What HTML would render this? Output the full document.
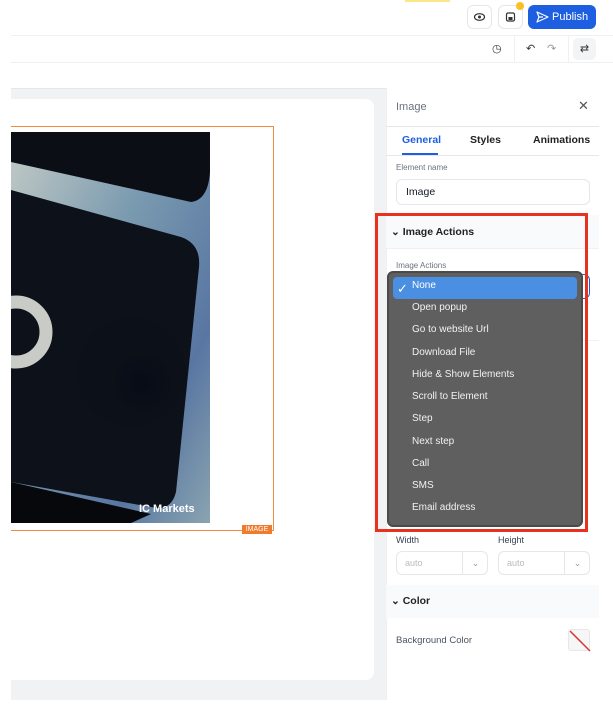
<!DOCTYPE html>
<html><head><meta charset="utf-8"><style>
*{box-sizing:border-box;margin:0;padding:0}
body{width:613px;height:713px;position:relative;overflow:hidden;background:#fff;font-family:"Liberation Sans",sans-serif;color:#111827}
.a{position:absolute}
.btn{position:absolute;border:1px solid #e5e7eb;border-radius:6px;background:#fff}
.item{position:absolute;left:412px;font-size:10px;color:#f1f1f1}
</style></head><body>
<div class="a" style="left:405px;top:0;width:45px;height:2px;background:#fde68a"></div>
<div class="btn" style="left:467px;top:5px;width:25px;height:24px"><svg width="23" height="22"><ellipse cx="11.5" cy="11" rx="5" ry="3.3" fill="none" stroke="#333" stroke-width="1.2"/><circle cx="11.5" cy="11" r="1.5" fill="#333"/></svg></div>
<div class="btn" style="left:498px;top:5px;width:25px;height:24px"><svg width="23" height="22"><rect x="7.5" y="7" width="8" height="8" rx="1.5" fill="none" stroke="#333" stroke-width="1.2"/><rect x="9.5" y="11" width="4" height="3" fill="#333"/></svg></div>
<div class="a" style="left:516px;top:2px;width:8px;height:8px;border-radius:50%;background:#fbbf24"></div>
<div class="a" style="left:528px;top:5px;width:68px;height:24px;background:#1d5fe0;border-radius:6px;color:#fff;font-size:11px;line-height:24px;padding-left:24px">Publish<svg class="a" style="left:8px;top:6px" width="13" height="12"><path d="M1 1L12 6L1 11L3 6Z M3 6H7" fill="none" stroke="#fff" stroke-width="1.2" stroke-linejoin="round"/></svg></div>
<div class="a" style="left:11px;top:35px;width:602px;height:1px;background:#eef0f2"></div>
<div class="a" style="left:514px;top:36px;width:1px;height:26px;background:#eef0f2"></div>
<div class="a" style="left:568px;top:36px;width:1px;height:26px;background:#eef0f2"></div>
<div class="a" style="left:492px;top:42px;font-size:11px;color:#333">◷</div>
<div class="a" style="left:526px;top:42px;font-size:11px;color:#333">↶</div>
<div class="a" style="left:547px;top:42px;font-size:11px;color:#999">↷</div>
<div class="a" style="left:573px;top:38px;width:23px;height:22px;background:#f3f4f6;border-radius:5px;font-size:11px;text-align:center;line-height:22px;color:#333">⇄</div>
<div class="a" style="left:11px;top:62px;width:602px;height:1px;background:#eef0f2"></div>
<div class="a" style="left:11px;top:88px;width:375px;height:612px;background:#f1f2f4"></div>
<div class="a" style="left:11px;top:99px;width:363px;height:581px;background:#fff;border-radius:0 8px 8px 0"></div>
<div class="a" style="left:11px;top:88px;width:375px;height:1px;background:#e5e7eb"></div>
<div class="a" style="left:11px;top:126px;width:263px;height:405px;border:1px solid #f08a3c;border-left:none"></div>
<svg class="a" style="left:11px;top:132px" width="199" height="391">
<defs><linearGradient id="g" x1="0" y1="0" x2="1" y2="1"><stop offset="0" stop-color="#c4ccc6"/><stop offset="0.4" stop-color="#7a9ab0"/><stop offset="0.75" stop-color="#5876a2"/><stop offset="1" stop-color="#8aa4b0"/></linearGradient>
<radialGradient id="r" cx="0.6" cy="0.6" r="0.3"><stop offset="0" stop-color="#050a18"/><stop offset="1" stop-color="#0c1018"/></radialGradient></defs>
<rect width="199" height="391" fill="url(#g)"/>
<path d="M0 0H199V40Q197 68 180 70L0 30Z" fill="#0b0e14"/>
<path d="M0 58L170 105Q190 112 188 135L165 360Q160 380 140 375L0 350Z" fill="#0d1119"/>
<path d="M0 350L140 382L120 391H0Z" fill="#06080c"/>
<circle cx="120" cy="240" r="55" fill="url(#r)" opacity="0.8"/>
<circle cx="5" cy="200" r="30" fill="none" stroke="#c8cbc6" stroke-width="13"/>
<text x="128" y="380" font-size="11" font-weight="bold" fill="#fff" font-family="Liberation Sans">IC Markets</text>
</svg>
<div class="a" style="left:242px;top:525px;width:30px;height:9px;background:#f07b2c;color:#fff;font-size:7px;line-height:9px;text-align:center">IMAGE</div>
<div class="a" style="left:386px;top:88px;width:213px;height:612px;background:#fff;border-left:1px solid #eef0f2"></div>
<div class="a" style="left:396px;top:101px;font-size:11px;color:#6b7280">Image</div>
<div class="a" style="left:578px;top:98px;font-size:13px;color:#555">✕</div>
<div class="a" style="left:386px;top:126px;width:213px;height:1px;background:#e5e7eb"></div>
<div class="a" style="left:402px;top:134px;font-size:10.5px;font-weight:bold;color:#1d5fe0">General</div>
<div class="a" style="left:470px;top:134px;font-size:10.5px;font-weight:bold;color:#222">Styles</div>
<div class="a" style="left:533px;top:134px;font-size:10.5px;font-weight:bold;color:#222">Animations</div>
<div class="a" style="left:402px;top:153px;width:36px;height:2px;background:#1d5fe0"></div>
<div class="a" style="left:386px;top:155px;width:213px;height:1px;background:#e5e7eb"></div>
<div class="a" style="left:396px;top:163px;font-size:8px;color:#6b7280">Element name</div>
<div class="a" style="left:396px;top:179px;width:194px;height:26px;border:1px solid #e5e7eb;border-radius:6px;font-size:10.5px;line-height:24px;padding-left:9px">Image</div>
<div class="a" style="left:386px;top:215px;width:213px;height:34px;background:#f9fafb;border-bottom:1px solid #eef0f2"></div>
<div class="a" style="left:391px;top:226px;font-size:10.5px;font-weight:bold;color:#222">⌄ Image Actions</div>
<div class="a" style="left:396px;top:261px;font-size:8px;color:#6b7280">Image Actions</div>
<div class="a" style="left:396px;top:274px;width:194px;height:25px;border:1px solid #1d5fe0;border-radius:6px"></div>
<div class="a" style="left:386px;top:340px;width:213px;height:1px;background:#eef0f2"></div>
<div class="a" style="left:387px;top:271px;width:196px;height:256px;background:#5f5f5f;border:2px solid #4a4a4a;border-radius:6px"></div>
<div class="a" style="left:393px;top:277px;width:184px;height:22px;background:#4a8fe2;border-radius:4px"></div>
<div class="a" style="left:397px;top:281px;font-size:13px;color:#fff">✓</div>
<div class="item" style="top:280px;color:#fff">None</div>
<div class="item" style="top:302px">Open popup</div>
<div class="item" style="top:324px">Go to website Url</div>
<div class="item" style="top:347px">Download File</div>
<div class="item" style="top:369px">Hide &amp; Show Elements</div>
<div class="item" style="top:391px">Scroll to Element</div>
<div class="item" style="top:413px">Step</div>
<div class="item" style="top:436px">Next step</div>
<div class="item" style="top:458px">Call</div>
<div class="item" style="top:480px">SMS</div>
<div class="item" style="top:502px">Email address</div>
<div class="a" style="left:375px;top:213px;width:213px;height:319px;border:3px solid #e8321e"></div>
<div class="a" style="left:396px;top:535px;font-size:9px;color:#374151">Width</div>
<div class="a" style="left:498px;top:535px;font-size:9px;color:#374151">Height</div>
<div class="a" style="left:396px;top:551px;width:92px;height:24px;border:1px solid #e5e7eb;border-radius:6px;font-size:9px;color:#bbb;line-height:22px;padding-left:8px">auto<span class="a" style="left:65px;top:0;height:22px;border-left:1px solid #e5e7eb;width:26px;text-align:center;color:#999">⌄</span></div>
<div class="a" style="left:498px;top:551px;width:92px;height:24px;border:1px solid #e5e7eb;border-radius:6px;font-size:9px;color:#bbb;line-height:22px;padding-left:8px">auto<span class="a" style="left:65px;top:0;height:22px;border-left:1px solid #e5e7eb;width:26px;text-align:center;color:#999">⌄</span></div>
<div class="a" style="left:386px;top:585px;width:213px;height:33px;background:#f9fafb"></div>
<div class="a" style="left:391px;top:595px;font-size:10.5px;font-weight:bold;color:#222">⌄ Color</div>
<div class="a" style="left:396px;top:635px;font-size:9.5px;color:#4b5563">Background Color</div>
<div class="a" style="left:568px;top:629px;width:22px;height:22px;border:1px solid #e5e7eb;border-radius:3px;background:#f6f6f6"><svg class="a" width="22" height="22"><line x1="1" y1="1" x2="21" y2="21" stroke="#d33" stroke-width="1.5"/></svg></div>
</body></html>
